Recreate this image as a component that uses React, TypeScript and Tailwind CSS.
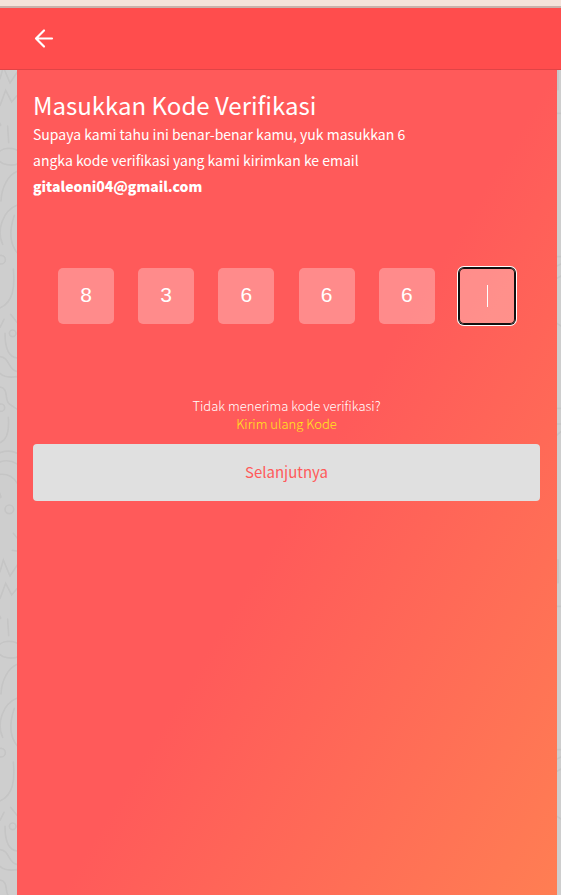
import { useState } from "react";

function Doodles() {
  return (
    <svg className="absolute inset-0 h-full w-full" aria-hidden="true">
      <defs>
        <pattern
          id="doodle"
          width="1683"
          height="1479"
          patternUnits="userSpaceOnUse"
          patternTransform="translate(0 60) scale(0.33333)"
        >
          <g fill="none" stroke="#c5c5c5" strokeWidth="5" strokeLinecap="round">
            <path d="M0 56 L10 21 L30 69 L52 36" />
            <path d="M0 136 L17 91 L35 126 L52 106" />
            <path d="M23 198 L26 248" />
            <path d="M-10 290 C-5 258 52 258 62 282 M-10 290 C0 318 40 320 60 308" />
            <path d="M3 423 C5 380 25 345 52 334" />
            <path d="M52 435 C10 451 -12 510 8 553" />
            <path d="M43 466 C28 510 28 550 52 579" />
            <circle cx="3" cy="599" r="13" />
            <path d="M40 627 C45 681 40 726 0 744" />
            <path d="M32 763 L52 788 M12 778 L0 802" />
            <circle cx="38" cy="820" r="10" />
            <path d="M15 820 C15 865 25 892 52 894" />
            <path d="M0 890 C30 892 22 928 52 935 M0 940 Q15 955 52 950" />
            <path d="M0 981 C28 985 12 1022 28 1032 L52 1048" />
            <circle cx="3" cy="1043" r="11" />
            <path d="M25 1072 C28 1110 20 1140 0 1148" />
            <path d="M0 1178 Q28 1168 52 1180 M0 1206 Q25 1196 52 1212" />
            <path d="M0 1243 Q34 1240 52 1270" />
            <circle cx="28" cy="1348" r="13" />
            <path d="M40 1420 L52 1435 M37 1471 L52 1473" />
            <path d="M1674 20 V90 M1671 160 H1683 M1671 590 H1683 M1671 618 L1683 612 M1671 655 L1683 648 M1671 790 L1683 798 M1671 1045 H1683 M1671 1092 H1683 M1671 1125 L1683 1115" />
          </g>
          <path d="M0 186 L5 196 L0 200 Z M0 1295 L6 1312 L0 1316 Z" fill="#c5c5c5" />
        </pattern>
      </defs>
      <rect width="100%" height="100%" fill="url(#doodle)" />
    </svg>
  );
}

const inputClass =
  "block h-14 w-14 rounded-[5px] bg-white/30 pb-[2px] text-center font-['Liberation_Sans',sans-serif] text-[21px] text-white caret-transparent outline-none";

export default function App() {
  const [digits, setDigits] = useState(["8", "3", "6", "6", "6", ""]);

  const update = (index: number, value: string) =>
    setDigits(digits.map((d, i) => (i === index ? value.slice(-1) : d)));

  return (
    <div className="relative flex min-h-screen flex-col bg-[#cecece] font-['Noto_Sans_CJK_SC','Noto_Sans_CJK_JP',sans-serif] text-white">
      <Doodles />
      <header className="relative border-t-[6px] border-[#f5e2da]">
        <div className="flex h-16 items-center border-t-2 border-b border-t-[#c9b1ab] border-b-[#e04446] bg-[#ff4d4d] px-8">
          <button type="button" aria-label="Kembali">
            <svg
              className="h-6 w-6"
              viewBox="0 0 24 24"
              fill="none"
              stroke="currentColor"
              strokeWidth="2.2"
              strokeLinecap="round"
              strokeLinejoin="round"
              aria-hidden="true"
            >
              <path d="M20 11.500 H4 M12 3.500 L4 11.500 L12 19.500" />
            </svg>
          </button>
        </div>
      </header>

      <main className="relative mr-1 ml-[17px] flex-1 bg-[linear-gradient(121deg,#ff5a5a_52%,#ff7e53)] pt-[19px] pr-[17px] pl-4">
        <h1 className="text-[24px] leading-8">Masukkan Kode Verifikasi</h1>
        <p className="max-w-[400px] text-[14px] leading-[26px]">
          Supaya kami tahu ini benar-benar kamu, yuk masukkan 6 angka kode verifikasi yang kami kirimkan ke email{" "}
          <strong className="font-black">gitaleoni04@gmail.com</strong>
        </p>

        <form onSubmit={(e) => e.preventDefault()}>
          <div className="mt-[69px] flex justify-between px-[25px]">
            {digits.map((digit, i) => (
              <div key={i} className="relative">
                <input
                  aria-label={`Angka ${i + 1}`}
                  inputMode="numeric"
                  autoFocus={i === 5}
                  value={digit}
                  onChange={(e) => update(i, e.target.value)}
                  className={
                    i === 5
                      ? `${inputClass} [box-shadow:inset_0_0_0_1px_#101010,0_0_0_1px_#101010,0_0_0_2px_#fff]`
                      : inputClass
                  }
                />
                {i === 5 && digit === "" && (
                  <span className="pointer-events-none absolute top-[17px] left-7 h-[22px] w-px bg-white" />
                )}
              </div>
            ))}
          </div>

          <div className="mt-[73px] text-center text-[13px] leading-[18px]">
            <p className="font-light">Tidak menerima kode verifikasi?</p>
            <a href="#kirim-ulang" className="font-light text-[#ffe81a]">
              Kirim ulang Kode
            </a>
          </div>

          <button
            type="submit"
            className="mt-[11px] h-[57px] w-full rounded bg-[#e0e0e0] text-[15px] text-[#ff5a5a]"
          >
            Selanjutnya
          </button>
        </form>
      </main>
    </div>
  );
}
